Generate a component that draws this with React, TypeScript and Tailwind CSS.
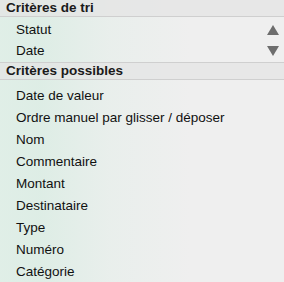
import React from "react";

const sortRows = ["Statut", "Date"];
const possible = [
  "Date de valeur",
  "Ordre manuel par glisser / déposer",
  "Nom",
  "Commentaire",
  "Montant",
  "Destinataire",
  "Type",
  "Numéro",
  "Catégorie",
];

function Header({ children }: { children: React.ReactNode }) {
  return (
    <div className="h-[17px] flex items-center pl-[6px] bg-[#e4e4e4]/75 border-b border-[#cfcfcf] font-bold text-[13.5px] text-[#1a1a1a] leading-none">
      {children}
    </div>
  );
}

export default function App() {
  return (
    <div
      className="w-[284px] h-[282px] overflow-hidden bg-[#efefef] bg-[linear-gradient(90deg,rgba(214,238,226,0.6)_0px,rgba(210,236,223,0.6)_40px,rgba(222,238,230,0.35)_110px,rgba(239,239,239,0)_190px)] text-[13.5px] text-[#111] leading-none"
      style={{ fontFamily: '"Liberation Sans", Arial, sans-serif' }}
    >
      <Header>Critères de tri</Header>
      <div className="flex flex-col pt-[2px] pb-[1px] border-b border-[#cfcfcf]">
        {sortRows.map((r, i) => (
          <div key={r} className="h-[21px] flex items-center pl-[16px] pr-[5px] justify-between">
            <span>{r}</span>
            <svg width="12" height="10" viewBox="0 0 12 10">
              {i === 0 ? (
                <polygon points="6,0 12,10 0,10" fill="#6d6d6d" />
              ) : (
                <polygon points="0,0 12,0 6,10" fill="#6d6d6d" />
              )}
            </svg>
          </div>
        ))}
      </div>
      <Header>Critères possibles</Header>
      <div className="flex flex-col pt-[5px]">
        {possible.map((r) => (
          <div key={r} className="h-[22px] flex items-center pl-[16px]">
            {r}
          </div>
        ))}
      </div>
    </div>
  );
}
